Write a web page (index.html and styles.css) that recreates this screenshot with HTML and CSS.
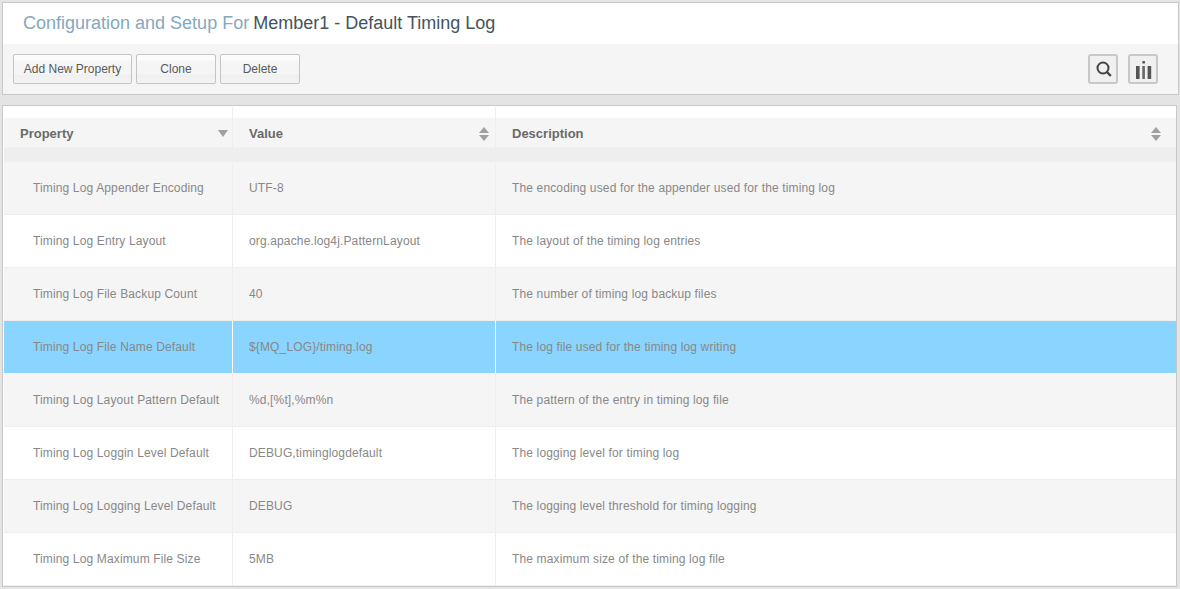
FILE: index.html
```html
<!DOCTYPE html>
<html lang="en">
<head>
<meta charset="utf-8">
<title>Configuration and Setup</title>
<link rel="stylesheet" href="styles.css">
</head>
<body>
<section class="panel top">
  <h1 class="title"><span class="lead">Configuration and Setup For</span><span class="name">Member1 - Default Timing Log</span></h1>
  <div class="toolbar">
    <button class="btn wide">Add New Property</button>
    <button class="btn">Clone</button>
    <button class="btn">Delete</button>
    <div class="tools">
      <button class="icon-btn" aria-label="Search">
        <svg width="18" height="18" viewBox="0 0 18 18"><circle cx="9" cy="8" r="5.5" fill="none" stroke="#444" stroke-width="2"/><path d="M13 12l3.8 4" stroke="#444" stroke-width="2.4" fill="none"/></svg>
      </button>
      <button class="icon-btn" aria-label="Columns">
        <svg width="18" height="20" viewBox="0 0 18 20"><rect x="2" y="7" width="3.6" height="13" fill="#555"/><rect x="8.3" y="7" width="2.6" height="13" fill="#666"/><rect x="13.6" y="7" width="3.6" height="13" fill="#555"/><rect x="8.4" y="2" width="2.5" height="2.5" fill="#555"/></svg>
      </button>
    </div>
  </div>
</section>
<section class="panel grid">
  <div class="row head">
    <div class="cell">Property<svg class="sort" width="10" height="7" viewBox="0 0 10 7"><path d="M0 0h10L5 7z" fill="#a0a0a0"/></svg></div>
    <div class="cell">Value<svg class="sort" width="10" height="14" viewBox="0 0 10 14"><path d="M5 0l5 6H0zM0 8h10l-5 6z" fill="#a0a0a0"/></svg></div>
    <div class="cell">Description<svg class="sort" width="10" height="14" viewBox="0 0 10 14"><path d="M5 0l5 6H0zM0 8h10l-5 6z" fill="#a0a0a0"/></svg></div>
  </div>
  <div class="row odd"><div class="cell">Timing Log Appender Encoding</div><div class="cell">UTF-8</div><div class="cell">The encoding used for the appender used for the timing log</div></div>
  <div class="row"><div class="cell">Timing Log Entry Layout</div><div class="cell">org.apache.log4j.PatternLayout</div><div class="cell">The layout of the timing log entries</div></div>
  <div class="row odd"><div class="cell">Timing Log File Backup Count</div><div class="cell">40</div><div class="cell">The number of timing log backup files</div></div>
  <div class="row selected"><div class="cell">Timing Log File Name Default</div><div class="cell">${MQ_LOG}/timing.log</div><div class="cell">The log file used for the timing log writing</div></div>
  <div class="row odd"><div class="cell">Timing Log Layout Pattern Default</div><div class="cell">%d,[%t],%m%n</div><div class="cell">The pattern of the entry in timing log file</div></div>
  <div class="row"><div class="cell">Timing Log Loggin Level Default</div><div class="cell">DEBUG,timinglogdefault</div><div class="cell">The logging level for timing log</div></div>
  <div class="row odd"><div class="cell">Timing Log Logging Level Default</div><div class="cell">DEBUG</div><div class="cell">The logging level threshold for timing logging</div></div>
  <div class="row"><div class="cell">Timing Log Maximum File Size</div><div class="cell">5MB</div><div class="cell">The maximum size of the timing log file</div></div>
</section>
</body>
</html>
```
FILE: styles.css
```css
* { box-sizing: border-box; }
html, body { height: 100%; }
body {
  margin: 0;
  padding: 2px 1px 0 2px;
  background: #e4e4e4;
  font-family: "Liberation Sans", Arial, sans-serif;
  font-size: 12px;
  color: #888;
  overflow: hidden;
}
.panel { border: 1px solid #c8c8c8; background: #fff; }
.top { height: 93px; margin-bottom: 10px; }
.title {
  margin: 0;
  height: 41px;
  padding: 10px 0 0 20px;
  display: flex;
  gap: 4px;
  font-size: 18px;
  line-height: 21px;
  font-weight: normal;
}
.lead { color: #84a9bd; }
.name { color: #44545c; }
.toolbar {
  height: 50px;
  background: #f5f5f5;
  padding: 10px 20px 0 10px;
  display: flex;
  align-items: flex-start;
  gap: 4px;
}
.btn {
  width: 80px;
  height: 30px;
  padding: 0;
  border: 1px solid #c4c4c4;
  border-radius: 2px;
  background: linear-gradient(#fbfbfb 0, #fbfbfb 5px, #f5f5f5 6px, #f5f5f5 19px, #f0f0f0 20px, #f4f4f4 100%);
  font: 12px "Liberation Sans", Arial, sans-serif;
  color: #5a5a5a;
}
.btn.wide { width: 119px; }
.tools { margin-left: auto; display: flex; gap: 10px; }
.icon-btn {
  width: 30px;
  height: 30px;
  padding: 0;
  border: 2px solid #c8c8c8;
  border-radius: 3px;
  background: #f0f0f0;
  display: flex;
  align-items: center;
  justify-content: center;
}
.grid {
  height: 482px;
  margin-right: 2px;
  padding: 1px 0 0 1px;
  overflow: hidden;
}
.row {
  display: grid;
  grid-template-columns: 229px 263px 1fr;
  height: 53px;
  background: #fff;
  border-bottom: 1px solid #eee;
  letter-spacing: 0.14px;
}
.row.odd { background: #f5f5f5; }
.row.selected { background: #89d5ff; border-bottom-color: #f5f5f5; }
.cell {
  display: flex;
  align-items: center;
  padding-left: 16px;
  border-right: 1px solid #eee;
}
.row .cell:first-child { padding-left: 29px; }
.row .cell:last-child { border-right: 0; }
.row.selected .cell { border-right-color: #fff; }
.row.selected .cell:last-child { border-right: 0; }
.row.head {
  height: 55px;
  border-bottom: 0;
  background: linear-gradient(#fff 0, #fff 10px, #fafafa 11px, #f5f5f5 12px, #f5f5f5 40px, #eee 41px, #eee 55px);
  font-size: 13px;
  font-weight: bold;
  color: #6a6a6a;
  letter-spacing: 0;
}
.row.head .cell { justify-content: space-between; padding-right: 6px; padding-bottom: 2px; }
.row.head .cell:first-child { padding-left: 16px; padding-right: 4px; }
.row.head .cell:last-child { padding-right: 15px; }
```
